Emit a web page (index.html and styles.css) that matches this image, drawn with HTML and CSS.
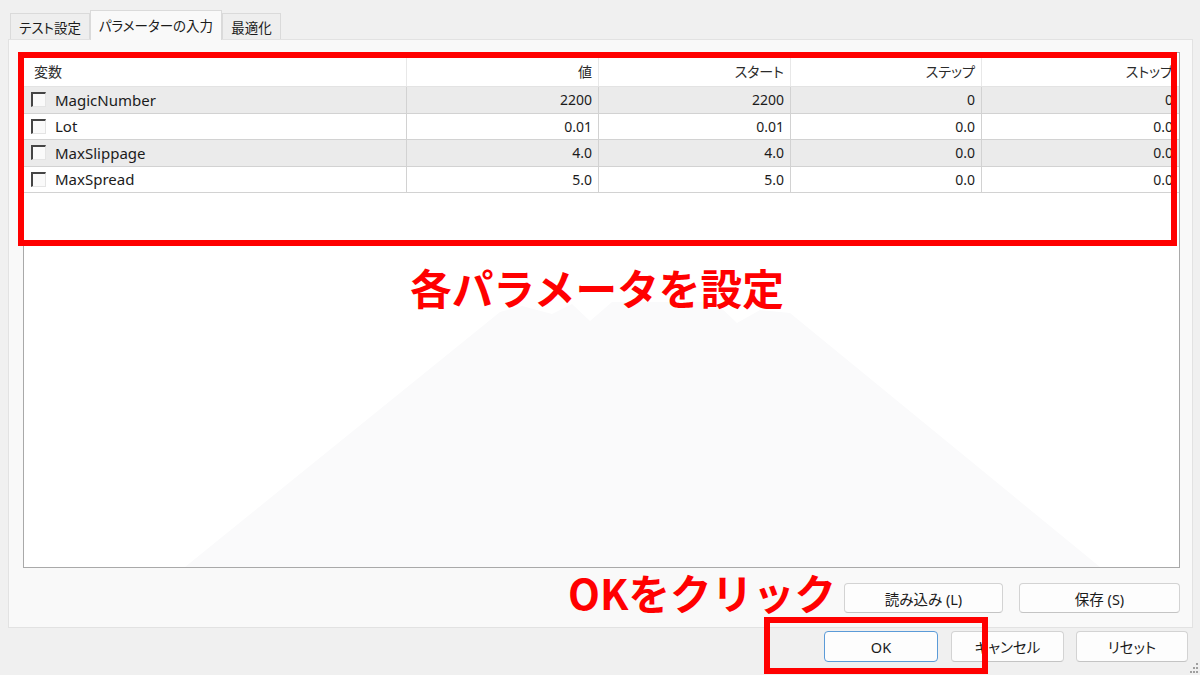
FILE: index.html
```html
<!DOCTYPE html>
<html lang="ja">
<head>
<meta charset="utf-8">
<title>パラメーターの入力</title>
<link rel="stylesheet" href="styles.css">
</head>
<body>
<div class="window">
  <div class="tabs">
    <div class="tab tab-test">テスト設定</div>
    <div class="tab tab-active">パラメーターの入力</div>
    <div class="tab tab-opt">最適化</div>
  </div>

  <div class="panel">
    <div class="listbox">
      <svg class="fuji" viewBox="24 53 1155 514" preserveAspectRatio="none">
        <polygon points="185,567 500,312 522,306 552,314 572,304 590,321 612,302 715,302 737,323 760,310 790,313 1100,567" fill="#fafafb"/>
      </svg>
      <div class="table">
        <div class="row head">
          <div class="cell name jp">変数</div>
          <div class="cell num jp">値</div>
          <div class="cell num jp">スタート</div>
          <div class="cell num jp">ステップ</div>
          <div class="cell num jp">ストップ</div>
        </div>
        <div class="row odd">
          <div class="cell name"><span class="cb"></span>MagicNumber</div>
          <div class="cell num">2200</div>
          <div class="cell num">2200</div>
          <div class="cell num">0</div>
          <div class="cell num">0</div>
        </div>
        <div class="row">
          <div class="cell name"><span class="cb"></span>Lot</div>
          <div class="cell num">0.01</div>
          <div class="cell num">0.01</div>
          <div class="cell num">0.0</div>
          <div class="cell num">0.0</div>
        </div>
        <div class="row odd">
          <div class="cell name"><span class="cb"></span>MaxSlippage</div>
          <div class="cell num">4.0</div>
          <div class="cell num">4.0</div>
          <div class="cell num">0.0</div>
          <div class="cell num">0.0</div>
        </div>
        <div class="row">
          <div class="cell name"><span class="cb"></span>MaxSpread</div>
          <div class="cell num">5.0</div>
          <div class="cell num">5.0</div>
          <div class="cell num">0.0</div>
          <div class="cell num">0.0</div>
        </div>
      </div>
    </div>
    <div class="panel-buttons">
      <button class="btn btn-load"><span class="jp">読み込み</span> (L)</button>
      <button class="btn btn-save"><span class="jp">保存</span> (S)</button>
    </div>
  </div>

  <div class="footer">
    <button class="btn btn-ok">OK</button>
    <button class="btn btn-cancel jp">キャンセル</button>
    <button class="btn btn-reset jp">リセット</button>
  </div>

  <svg class="grip" width="10" height="12" viewBox="0 0 10 12">
    <rect x="7" y="1" width="2" height="2" fill="#a0a0a0"/>
    <rect x="4" y="5" width="2" height="2" fill="#a0a0a0"/>
    <rect x="7" y="5" width="2" height="2" fill="#a0a0a0"/>
    <rect x="1" y="9" width="2" height="2" fill="#a0a0a0"/>
    <rect x="4" y="9" width="2" height="2" fill="#a0a0a0"/>
    <rect x="7" y="9" width="2" height="2" fill="#a0a0a0"/>
  </svg>

  <div class="mark mark-table"></div>
  <div class="note note-params">各パラメータを設定</div>
  <div class="note note-ok">OKをクリック</div>
  <div class="mark mark-ok"></div>
</div>
</body>
</html>
```

FILE: styles.css
```css
html, body {
  margin: 0;
  padding: 0;
}

body {
  background: #f0f0f0;
}

.window {
  position: relative;
  width: 1200px;
  height: 675px;
  overflow: hidden;
  background: #f0f0f0;
  font-family: "Noto Sans", "Noto Sans CJK JP", sans-serif;
  font-size: 14px;
  color: #1b1b1b;
}

.jp {
  font-family: "Noto Sans CJK JP", sans-serif;
  font-feature-settings: "palt" 1;
}

/* Tabs */
.tabs {
  display: flex;
  align-items: flex-end;
  height: 39px;
  box-sizing: border-box;
  padding-left: 10px;
}

.tab {
  height: 26px;
  box-sizing: border-box;
  border: 1px solid #dadada;
  border-bottom: none;
  background: #eeeeee;
  display: flex;
  align-items: center;
  justify-content: center;
  font-family: "Noto Sans CJK JP", sans-serif;
  font-feature-settings: "palt" 1;
  font-size: 13.5px;
  color: #1b1b1b;
}

.tab-test {
  width: 80px;
}

.tab-active {
  width: 132px;
  height: 30px;
  background: #f9f9f9;
  margin-bottom: -1px;
  position: relative;
  z-index: 1;
  padding-bottom: 2px;
}

.tab-opt {
  width: 59px;
}

/* Panel */
.panel {
  margin: 0 7px 0 8px;
  height: 589px;
  box-sizing: border-box;
  border: 1px solid #e2e2e2;
  background: #f9f9f9;
  padding: 12px 12px 14px 14px;
  display: flex;
  flex-direction: column;
}

.listbox {
  position: relative;
  height: 516px;
  box-sizing: border-box;
  border: 1px solid #a9a9a9;
  background: #ffffff;
  overflow: hidden;
}

.fuji {
  position: absolute;
  left: 0;
  top: 0;
  width: 1155px;
  height: 514px;
}

.table {
  position: relative;
}

.row {
  display: grid;
  grid-template-columns: 383px 192px 192px 191px 1fr;
  height: 26.5px;
  box-sizing: border-box;
  border-bottom: 1px solid #d2d2d2;
  background: #ffffff;
}

.row.odd {
  background: #ebebeb;
}

.row.head {
  height: 34px;
  border-bottom: 1px solid #e3e3e3;
  padding-top: 2px;
}

.cell {
  display: flex;
  align-items: center;
  box-sizing: border-box;
  border-right: 1px solid #d2d2d2;
  white-space: nowrap;
  overflow: hidden;
}

.head .cell {
  border-right-color: #e8e8e8;
  color: #2b2b2b;
}

.cell:last-child {
  border-right: none;
}

.cell.name {
  padding-left: 7px;
  font-size: 15px;
}

.head .cell.name {
  padding-left: 10px;
  font-size: 14px;
}

.cell.num {
  justify-content: flex-end;
  padding-right: 6px;
}

.cb {
  width: 15px;
  height: 15px;
  box-sizing: border-box;
  border-top: 2px solid #454545;
  border-left: 2px solid #454545;
  border-right: 1px solid #e4e4e4;
  border-bottom: 1px solid #e4e4e4;
  background: #fafafa;
  margin-right: 9px;
  flex: none;
}

/* Panel buttons */
.panel-buttons {
  display: flex;
  justify-content: flex-end;
  gap: 16px;
  margin-top: 15px;
  height: 30px;
}

.btn {
  height: 30px;
  box-sizing: border-box;
  border: 1px solid #d3d3d3;
  border-bottom-color: #c4c4c4;
  border-radius: 4px;
  background: #fdfdfd;
  font-family: "Noto Sans", "Noto Sans CJK JP", sans-serif;
  font-size: 14.5px;
  color: #1b1b1b;
  padding: 0;
  margin: 0;
}

.btn-load {
  width: 159px;
}

.btn-save {
  width: 161px;
}

/* Footer */
.footer {
  display: flex;
  justify-content: flex-end;
  padding: 3px 12px 0 0;
  height: 47px;
  box-sizing: border-box;
}

.footer .btn {
  height: 31px;
}

.btn-ok {
  width: 114px;
  border-color: #5b9bd8;
}

.btn-cancel {
  width: 113px;
  margin-left: 13px;
}

.btn-reset {
  width: 112px;
  margin-left: 12px;
}

.grip {
  position: absolute;
  right: 1px;
  bottom: 1px;
}

/* Annotations */
.mark {
  position: absolute;
  box-sizing: border-box;
  border: 6px solid #ff0000;
}

.mark-table {
  left: 18px;
  top: 52px;
  width: 1159px;
  height: 194px;
}

.mark-ok {
  left: 764px;
  top: 617px;
  width: 224px;
  height: 57px;
}

.note {
  position: absolute;
  color: #ff0000;
  font-family: "Noto Sans CJK JP", sans-serif;
  font-weight: 700;
  line-height: 1;
  white-space: nowrap;
}

.note-params {
  left: 410px;
  top: 267px;
  font-size: 41.7px;
}

.note-ok {
  left: 568px;
  top: 572px;
  font-size: 41.5px;
}
```
